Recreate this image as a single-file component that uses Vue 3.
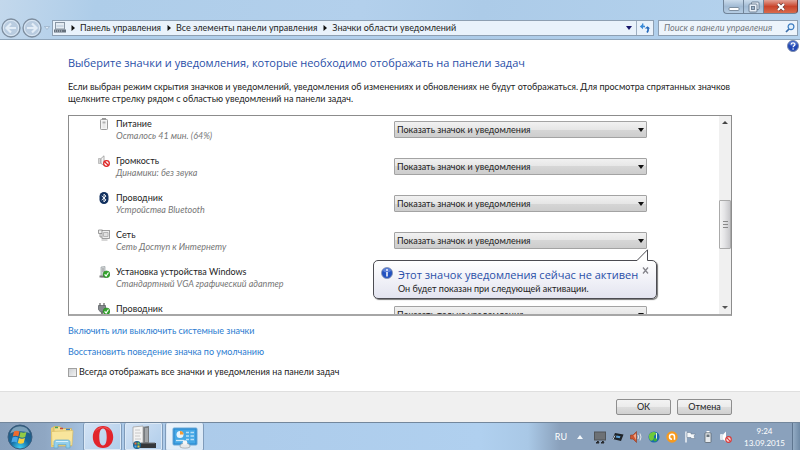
<template>
  <div class="desktop">
    <!-- Заголовок окна и адресная строка -->
    <header class="chrome">
      <div class="window-buttons">
        <button class="win-btn" aria-label="Свернуть">
          <svg width="12" height="12" viewBox="0 0 12 12"><rect x="1" y="6.5" width="10" height="3" rx="1" fill="#fff" stroke="#66788c" stroke-width=".8" /></svg>
        </button>
        <button class="win-btn" aria-label="Развернуть">
          <svg width="12" height="12" viewBox="0 0 12 12" fill="#e8eff7" stroke="#66788c" stroke-width=".9">
            <rect x="3.5" y="1" width="7.5" height="7.5" rx="1" />
            <rect x="1" y="3" width="8" height="8" rx="1" />
            <rect x="3.5" y="5.5" width="3" height="3" fill="#9db3ca" />
          </svg>
        </button>
        <button class="win-btn close" aria-label="Закрыть">
          <svg width="12" height="12" viewBox="0 0 12 12">
            <path d="M3 3l6 6M9 3l-6 6" stroke="#6d3a37" stroke-width="3.6" />
            <path d="M3 3l6 6M9 3l-6 6" stroke="#fff" stroke-width="2.2" />
          </svg>
        </button>
      </div>

      <div class="nav">
        <button class="round" aria-label="Назад">
          <svg width="20" height="20" viewBox="0 0 20 20">
            <circle cx="10" cy="10" r="9" fill="#b9cce0" stroke="#7e8e9f" stroke-width="1.3" />
            <circle cx="10" cy="10" r="7.6" fill="none" stroke="#dbe7f3" />
            <path d="M15 10H6M10 5.5L5.5 10l4.5 4.5" fill="none" stroke="#e3edf7" stroke-width="2.2" />
          </svg>
        </button>
        <button class="round" aria-label="Вперед">
          <svg width="20" height="20" viewBox="0 0 20 20">
            <circle cx="10" cy="10" r="9" fill="#b9cce0" stroke="#7e8e9f" stroke-width="1.3" />
            <circle cx="10" cy="10" r="7.6" fill="none" stroke="#dbe7f3" />
            <path d="M5 10h9M10 5.5l4.5 4.5-4.5 4.5" fill="none" stroke="#e3edf7" stroke-width="2.2" />
          </svg>
        </button>
        <svg class="history" width="6" height="4" viewBox="0 0 6 4"><path d="M.5.5h5L3 3.5z" fill="#dce9f6" stroke="#8fa5bc" stroke-width=".6" /></svg>

        <div class="address">
          <svg class="address-icon" width="12" height="11" viewBox="0 0 12 11">
            <rect x="1.5" y=".5" width="9" height="6.5" fill="#e4ebf2" stroke="#8a97a5" />
            <path d="M2.5 4h7" stroke="#b4c6d8" />
            <rect x="0" y="7.5" width="12" height="3" fill="#66717d" />
            <path d="M1 9h7" stroke="#c5ced7" stroke-dasharray="1 1" />
          </svg>
          <template v-for="miga in migas" :key="miga">
            <svg class="crumb-arrow" width="4" height="6" viewBox="0 0 4 6"><path d="M.5 0v6L4 3z" fill="#111" /></svg>
            <a href="#" class="crumb">{{ miga }}</a>
          </template>
          <button class="address-drop" aria-label="Предыдущие расположения">
            <svg width="6" height="4" viewBox="0 0 6 4"><path d="M0 0h6L3 4z" fill="#16166b" /></svg>
          </button>
          <button class="refresh" aria-label="Обновить">
            <svg width="12" height="12" viewBox="0 0 12 12">
              <path d="M3.7 1.5v3" stroke="#3a8ad8" stroke-width="1.4" />
              <path d="M.8 4.5L4 1.8v5.4z" fill="#3a8ad8" />
              <path d="M3 4.5h3" stroke="#3a8ad8" stroke-width="1.6" />
              <path d="M5.8 6.5l2.7-2.2 2.7 2.2z" fill="#2368bb" />
              <path d="M8.7 5.5c.9 2 .5 3.5-.7 5" fill="none" stroke="#2368bb" stroke-width="1.6" />
            </svg>
          </button>
        </div>

        <div class="search">
          <input v-model="busqueda" type="text" aria-label="Поиск" placeholder="Поиск в панели управления" />
          <svg width="10" height="10" viewBox="0 0 10 10" fill="none">
            <path d="M4.5 5.5L1 9" stroke="#3c6ea8" stroke-width="1.7" />
            <circle cx="6" cy="3.8" r="2.9" fill="#e4f1fc" stroke="#3c7cc0" stroke-width="1.2" />
          </svg>
        </div>
      </div>
    </header>

    <!-- Содержимое -->
    <main class="content">
      <button class="help" aria-label="Справка">
        <svg width="12" height="12" viewBox="0 0 12 12">
          <circle cx="6" cy="6" r="5.5" fill="#2349b5" stroke="#7d8cad" />
          <ellipse cx="6" cy="3.5" rx="3.8" ry="2.3" fill="#6f8fdc" opacity=".6" />
          <path d="M4.2 4.6c0-2.4 3.7-2.3 3.7-.2C7.9 5.7 6.1 5.7 6.1 7.3" fill="none" stroke="#fff" stroke-width="1.2" />
          <circle cx="6.1" cy="9" r=".8" fill="#fff" />
        </svg>
      </button>

      <h1>Выберите значки и уведомления, которые необходимо отображать на панели задач</h1>
      <p class="intro">
        Если выбран режим скрытия значков и уведомлений, уведомления об изменениях и обновлениях не будут отображаться. Для просмотра спрятанных значков щелкните стрелку рядом с областью уведомлений на панели задач.
      </p>

      <div class="list">
        <div class="rows">
          <div v-for="(fila, i) in filas" :key="i" class="row">
            <svg v-if="fila.icono === 'battery'" class="row-icon" width="12" height="12" viewBox="0 0 12 12">
              <rect x="4" y="0" width="4" height="2" fill="#999" />
              <rect x="2.5" y="1.5" width="7" height="10" rx=".8" fill="#f4f4f4" stroke="#9d9d9d" />
              <rect x="4.5" y="3.5" width="3" height="2" fill="#b0b0b0" />
              <path d="M4.5 7h3M4.5 9h3" stroke="#dcdcdc" />
            </svg>
            <svg v-else-if="fila.icono === 'volume'" class="row-icon" width="12" height="12" viewBox="0 0 12 12">
              <path d="M.5 3.5h2v5h-2z" fill="#d5d5d5" stroke="#aaa" stroke-width=".7" />
              <path d="M3 3.5L6 .8v9.5L3 8.5z" fill="#f3f3f3" stroke="#999" stroke-width=".8" />
              <circle cx="8.5" cy="8.5" r="2.8" fill="#fff" stroke="#e02424" stroke-width="1.3" />
              <path d="M6.7 6.7l3.6 3.6" stroke="#e02424" stroke-width="1.3" />
            </svg>
            <svg v-else-if="fila.icono === 'bluetooth'" class="row-icon" width="12" height="12" viewBox="0 0 12 12">
              <rect x="1.5" y="0" width="9" height="12" rx="4.5" fill="#12305e" />
              <path d="M3.7 3.9l4.3 4-2 2V2.1l2 2-4.3 4" fill="none" stroke="#fff" stroke-width=".9" />
            </svg>
            <svg v-else-if="fila.icono === 'network'" class="row-icon" width="12" height="12" viewBox="0 0 12 12" fill="#eee" stroke="#888" stroke-width=".8">
              <path d="M.5 1h4v3.5h-4zM2 4.5V8h2" />
              <rect x="4" y="1.5" width="7.5" height="8" />
              <path d="M5.5 3.5H10v4H5.5z" fill="#e0e0e0" stroke="#aaa" />
              <path d="M3.5 11h6" stroke="#999" />
            </svg>
            <svg v-else class="row-icon" width="12" height="12" viewBox="0 0 12 12">
              <g v-if="fila.icono === 'device'">
                <path d="M3 1l4-.5V11H3z" fill="#d3d6d8" stroke="#9aa0a4" stroke-width=".7" />
                <path d="M1.5 9.5h7v2h-7z" fill="#777" />
                <path d="M4 3h2M4 5h2" stroke="#888" stroke-width=".8" />
              </g>
              <g v-else>
                <path d="M2 0v3M6 0v3" stroke="#777" fill="none" stroke-width="1.4" />
                <path d="M.5 2.5h7v4L5.5 9h-3l-2-2.5z" fill="#85898d" stroke="#55595d" stroke-width=".7" />
                <path d="M4 9v3" stroke="#555" stroke-width="1.5" />
              </g>
              <circle cx="8.5" cy="8.3" r="3.4" fill="#36a52e" stroke="#1f7c1d" stroke-width=".5" />
              <path d="M6.6 8.3l1.5 1.7 2.4-3.5" fill="none" stroke="#fff" stroke-width="1.2" />
            </svg>

            <label class="row-text" :for="'sel' + i">
              <span class="row-title">{{ fila.titulo }}</span>
              <span class="row-sub">{{ fila.detalle }}</span>
            </label>

            <div class="picker">
              <select :id="'sel' + i" v-model="fila.valor">
                <option v-for="op in opciones" :key="op">{{ op }}</option>
              </select>
              <svg class="picker-arrow" width="6" height="4" viewBox="0 0 6 4"><path d="M0 0h6L3 4z" fill="#111" /></svg>

              <div v-if="fila.aviso && mostrarAviso" class="balloon" role="status">
                <svg class="balloon-tail" width="12" height="12" viewBox="0 0 12 12">
                  <path d="M0 11.5L10.5.8V12H0z" fill="#fff" />
                  <path d="M0 11.5L10.5.8v10.7" fill="none" stroke="#4c4c52" />
                </svg>
                <svg class="balloon-icon" width="12" height="12" viewBox="0 0 12 12">
                  <circle cx="6" cy="6" r="5.5" fill="#2352c0" stroke="#8792ad" stroke-width=".8" />
                  <ellipse cx="6" cy="3.3" rx="3.8" ry="2.2" fill="#7f9de6" opacity=".6" />
                  <path d="M6 5v4.5" stroke="#fff" stroke-width="1.5" />
                  <circle cx="6" cy="3" r=".9" fill="#fff" />
                </svg>
                <div class="balloon-body">
                  <strong>Этот значок уведомления сейчас не активен</strong>
                  <span>Он будет показан при следующей активации.</span>
                </div>
                <button class="balloon-close" aria-label="Закрыть" @click="mostrarAviso = false">
                  <svg width="7" height="7" viewBox="0 0 7 7"><path d="M1 .5l5 6M6 .5l-5 6" stroke="#85858c" stroke-width="1.3" /></svg>
                </button>
              </div>
            </div>
          </div>
        </div>

        <div class="scrollbar">
          <svg width="6" height="3" viewBox="0 0 6 3"><path d="M0 3h6L3 0z" fill="#444" /></svg>
          <div class="thumb"><i></i><i></i><i></i></div>
          <svg width="6" height="3" viewBox="0 0 6 3"><path d="M0 0h6L3 3z" fill="#555" /></svg>
        </div>
      </div>

      <a href="#" class="link">Включить или выключить системные значки</a>
      <a href="#" class="link">Восстановить поведение значка по умолчанию</a>
      <label class="always">
        <input v-model="mostrarTodo" type="checkbox" />
        Всегда отображать все значки и уведомления на панели задач
      </label>
    </main>

    <footer class="actions">
      <button class="btn">ОК</button>
      <button class="btn">Отмена</button>
    </footer>

    <!-- Панель задач -->
    <div class="taskbar">
      <button class="start" aria-label="Пуск">
        <svg width="26" height="26" viewBox="0 0 26 26">
          <defs>
            <radialGradient id="orb" cx=".5" cy=".95" r=".9">
              <stop offset="0" stop-color="#3fd0f5" />
              <stop offset=".45" stop-color="#14699f" />
              <stop offset="1" stop-color="#2b5677" />
            </radialGradient>
          </defs>
          <circle cx="13" cy="13" r="12" fill="url(#orb)" stroke="#3b5f80" />
          <path d="M3 9.5a10.5 10.5 0 0 1 20 0c-6-3-14-3-20 0z" fill="#c0d8e8" opacity=".55" />
          <path d="M7 7.5c2-1 3.5-1 5.5 0l-1.2 5c-2-1-3.5-1-5.5 0z" fill="#ee6a2c" />
          <path d="M13.5 8c2 1 3.8 1 6 0l-1.3 5c-2 1-3.9 1-5.9 0z" fill="#93cb45" />
          <path d="M5.5 13.5c2-1 3.5-1 5.5 0l-1.2 5c-2-1-3.5-1-5.5 0z" fill="#48a6e8" />
          <path d="M12 14c2 1 3.9 1 6 0l-1.3 5c-2 1-3.9 1-5.9 0z" fill="#fbcf3b" />
        </svg>
      </button>
      <button class="task plain" aria-label="Библиотеки">
        <svg width="24" height="24" viewBox="0 0 24 24">
          <path d="M1 3l4-2 3 1.5V22H1z" fill="#e8cd75" />
          <path d="M4 1.5h6l2 2h9.5V21H4z" fill="#f4df92" stroke="#cfae56" stroke-width=".7" />
          <path d="M5 2.5h3" stroke="#4aa152" stroke-width="1.5" />
          <path d="M10 3.5h3" stroke="#c4483e" stroke-width="1.5" />
          <path d="M16 4.5h4" stroke="#3c7fc4" stroke-width="1.5" />
          <path d="M1.5 6.5L23 5.5l-1 15H2z" fill="#f8e59c" stroke="#d9bd66" stroke-width=".7" />
          <path d="M4 23v-5.5c0-1.8 1-2.5 2.5-2.5h11c1.5 0 2.5.7 2.5 2.5V23h-4v-3.5H8V23z" fill="#93cfec" stroke="#61a6cd" stroke-width=".7" />
          <path d="M6 16.5h12" stroke="#d9f2fc" />
        </svg>
      </button>
      <button class="task" aria-label="Opera">
        <svg width="24" height="24" viewBox="0 0 24 24">
          <path fill-rule="evenodd" d="M12 1C5.8 1 1.8 5.8 1.8 12S5.8 23 12 23s10.2-4.8 10.2-11S18.2 1 12 1zm0 2.5c2.7 0 3.7 3.8 3.7 8.5s-1 8.5-3.7 8.5-3.7-3.8-3.7-8.5 1-8.5 3.7-8.5z" fill="#e2242c" />
          <path d="M4 7c1-3 4-5 8-5s7 2 8 5c-1.5-2-3.3-2.8-4.8-3-.7-1-1.7-1.5-3.2-1.5S9.5 3 8.8 4C7.3 4.2 5.5 5 4 7z" fill="#f4716d" opacity=".6" />
        </svg>
      </button>
      <button class="task" aria-label="Диспетчер устройств">
        <svg width="26" height="24" viewBox="0 0 26 24">
          <path d="M11 2l7-1v18h-7z" fill="#777b7f" />
          <path d="M14 3h3v14h-3z" fill="#a2a5a8" />
          <path d="M2 2l10-1v18H2z" fill="#f3f3f3" stroke="#a3a3a3" stroke-width=".8" />
          <path d="M4 5h5M4 8h6M4 11h5M4 14h6" stroke="#bcbcbc" stroke-width=".8" />
          <path d="M3 18h22v5H3z" fill="#34373b" />
          <path d="M10 18h14" stroke="#75797d" />
          <circle cx="6" cy="20" r="4" fill="#1b638f" />
          <path d="M3.5 17.5h2v2h-2z" fill="#ea6b34" />
          <path d="M6.5 17.5h2v2h-2z" fill="#87c648" />
          <path d="M3.5 20.5h2v2h-2z" fill="#4ea9e8" />
          <path d="M6.5 20.5h2v2h-2z" fill="#f6cb3c" />
        </svg>
      </button>
      <button class="task active" aria-label="Панель управления">
        <svg width="26" height="24" viewBox="0 0 26 24">
          <rect x="1" y="3" width="24" height="17" rx="1" fill="#2687cf" stroke="#6aaad9" />
          <rect x="2.5" y="4.5" width="21" height="14" fill="#46a8e6" />
          <circle cx="8" cy="9.5" r="3.5" fill="#e9f4fb" />
          <path d="M8 9.5V6a3.5 3.5 0 0 1 3.5 3.5z" fill="#f39a35" />
          <path d="M4 15.5h8" stroke="#cfe9f9" stroke-width="1.3" />
          <path d="M14 7.5h3M18.5 7.5H22M14 11h3M18.5 11H22M14 14.5h3M18.5 14.5H22" stroke="#b9dff6" stroke-width="1.4" />
          <path d="M8 22c0-3 2-4 5-4s5 1 5 4c-2 1.5-8 1.5-10 0z" fill="#e5e8ea" stroke="#9aa1a6" stroke-width=".7" />
          <circle cx="13" cy="17.5" r="2.3" fill="#f4f5f6" />
        </svg>
      </button>

      <div class="tray">
        <span class="lang">RU</span>
        <svg class="tray-up" width="6" height="4" viewBox="0 0 6 4"><path d="M0 4h6L3 0z" fill="#f4f8fb" /></svg>
        <svg width="12" height="13" viewBox="0 0 12 13">
          <rect x=".5" y="1" width="11" height="8" fill="#6d7175" stroke="#505458" />
          <path d="M2 12l2-2 1 2zM7 12l2-2 1 2z" fill="#26292c" stroke="#26292c" />
        </svg>
        <svg width="12" height="12" viewBox="0 0 12 12">
          <path d="M3 2l8.5 1.5L9 10 .5 8z" fill="#1e2328" />
          <path d="M4.5 4.5l4 .8-.8 2-4-.8z" fill="#5ea1d6" />
          <path d="M1 8.5l2-4" stroke="#bfc8d0" />
        </svg>
        <svg width="12" height="12" viewBox="0 0 12 12">
          <path d="M.5 4H3L6.5.5v11L3 8H.5z" fill="#cd5530" stroke="#8f3a22" stroke-width=".6" />
          <path d="M3.5 4.5L6 2.5V9" fill="#f4a584" />
          <path d="M8 4q1.2 2 0 4M10 2.5q2 3.5 0 7" fill="none" stroke="#ececec" stroke-width=".9" />
        </svg>
        <svg width="12" height="12" viewBox="0 0 12 12">
          <circle cx="6" cy="6" r="5.5" fill="#1b68ac" />
          <path d="M2 2.5C4 .5 7 .5 8 2S5.5 4 6 6s-2 4.5-3.5 3.5S0 4.5 2 2.5z" fill="#6fca3a" />
          <path d="M8.5 2v6.5" stroke="#e7f6da" />
          <circle cx="7.2" cy="8.8" r="1.8" fill="#39b338" />
        </svg>
        <svg width="12" height="12" viewBox="0 0 12 12">
          <circle cx="6" cy="6" r="5.7" fill="#f79a1e" />
          <path d="M8.5 8.8v-3A2.5 2.5 0 1 0 6 8.3" fill="none" stroke="#fff" stroke-width="1.5" />
        </svg>
        <svg width="12" height="12" viewBox="0 0 12 12">
          <path d="M2 .5v11" stroke="#fff" stroke-width="1.3" />
          <path d="M3 1.5h4V3h4.5L10 5l1 2.5H7v-1H3z" fill="#f5f8fa" stroke="#62758a" stroke-width=".5" />
        </svg>
        <svg width="12" height="12" viewBox="0 0 12 12">
          <path d="M4.5 0h3v2h-3z" fill="#fff" />
          <rect x="3" y="1.8" width="6" height="9.7" rx=".8" fill="#e6eaed" stroke="#59656f" stroke-width=".8" />
          <rect x="4.5" y="3.5" width="3" height="2.5" fill="#6a757e" />
        </svg>
        <svg width="12" height="12" viewBox="0 0 12 12">
          <path d="M.5 3.5h2v5h-2z" fill="#dfe6ed" stroke="#fff" stroke-width=".6" />
          <path d="M3 3.5L6 .5v10l-3-2z" fill="#fff" />
          <circle cx="8.5" cy="8.5" r="2.8" fill="#f6dcdc" stroke="#d93a3a" stroke-width="1.2" />
          <path d="M6.7 6.7l3.6 3.6" stroke="#d93a3a" stroke-width="1.2" />
        </svg>
        <div class="clock">
          <span>9:24</span>
          <span>13.09.2015</span>
        </div>
      </div>
      <button class="show-desktop" aria-label="Свернуть все окна"></button>
    </div>
  </div>
</template>

<script setup>
import { ref } from 'vue';

const migas = ['Панель управления', 'Все элементы панели управления', 'Значки области уведомлений'];
const opciones = ['Показать значок и уведомления', 'Скрыть значок и уведомления', 'Показать только уведомления'];

const busqueda = ref('');
const mostrarTodo = ref(false);
const mostrarAviso = ref(true);

const filas = ref([
  { icono: 'battery', titulo: 'Питание', detalle: 'Осталось 41 мин. (64%)', valor: opciones[0] },
  { icono: 'volume', titulo: 'Громкость', detalle: 'Динамики: без звука', valor: opciones[0] },
  { icono: 'bluetooth', titulo: 'Проводник', detalle: 'Устройства Bluetooth', valor: opciones[0] },
  { icono: 'network', titulo: 'Сеть', detalle: 'Сеть Доступ к Интернету', valor: opciones[0], aviso: true },
  { icono: 'device', titulo: 'Установка устройства Windows', detalle: 'Стандартный VGA графический адаптер', valor: opciones[0] },
  { icono: 'eject', titulo: 'Проводник', detalle: '', valor: opciones[2] },
]);
</script>

<style>
body {
  margin: 0;
}
</style>

<style scoped>
* {
  box-sizing: border-box;
}

.desktop {
  min-height: 100vh;
  display: flex;
  flex-direction: column;
  background: #fff;
  color: #222;
  font-family: Lato, "Open Sans", sans-serif;
  font-size: 9px;
  line-height: 12px;
}

button,
input,
select {
  font: inherit;
  color: inherit;
  margin: 0;
  padding: 0;
}

svg {
  display: block;
  flex: none;
}

a {
  text-decoration: none;
}

/* Рамка окна */
.chrome {
  height: 40px;
  background: linear-gradient(100deg, #c3d8ec 0, #aecde9 12%, #b3d0ec 45%, #accbe8 60%, #b5d3ee 100%);
  border-bottom: 1px solid #8fa5ba;
}

.window-buttons {
  display: flex;
  justify-content: flex-end;
  height: 19px;
  padding-right: 2px;
}

.win-btn {
  width: 20px;
  height: 14px;
  display: flex;
  align-items: center;
  justify-content: center;
  border: 1px solid #71859a;
  border-top: 0;
  border-right: 0;
  background: linear-gradient(#cbdcec, #a2bbd4 50%, #b5cde4);
}

.win-btn:first-child {
  border-radius: 0 0 0 4px;
}

.win-btn.close {
  width: 35px;
  border-right: 1px solid #6b3838;
  border-radius: 0 0 4px 0;
  background: linear-gradient(#e2a195, #c9442c 50%, #d96a4c);
}

.nav {
  display: flex;
  align-items: center;
  height: 17px;
  padding: 0 2px 0 1px;
}

.round {
  border: 0;
  background: none;
  margin-right: 1px;
}

.history {
  margin: 0 2px 0 1px;
}

.address {
  flex: 1;
  height: 16px;
  display: flex;
  align-items: center;
  background: #e9f2fb;
  border: 1px solid #8d9fb2;
}

.address-icon {
  margin: 0 5px 0 1px;
}

.crumb {
  color: #222;
  margin: 0 6px 0 5px;
}

.address-drop {
  margin-left: auto;
  width: 14px;
  height: 14px;
  display: flex;
  align-items: center;
  justify-content: center;
  border: 0;
  background: none;
}

.refresh {
  width: 17px;
  height: 14px;
  display: flex;
  align-items: center;
  justify-content: center;
  border: 0;
  border-left: 1px solid #9fb0c2;
  background: none;
}

.search {
  width: 140px;
  height: 16px;
  margin-left: 4px;
  padding: 0 2px 0 5px;
  display: flex;
  align-items: center;
  background: #edf4fb;
  border: 1px solid #8d9fb2;
}

.search input {
  flex: 1;
  min-width: 0;
  border: 0;
  background: none;
  outline: none;
}

.search input::placeholder {
  color: #74797f;
  font-style: italic;
}

/* Содержимое */
.content {
  flex: 1;
  position: relative;
  display: flex;
  flex-direction: column;
  align-items: flex-start;
  padding: 14px 68px 13px;
}

.help {
  position: absolute;
  top: 0;
  right: 1px;
  border: 0;
  background: none;
}

h1 {
  margin: 0;
  font-family: "Open Sans", "Noto Sans", sans-serif;
  font-size: 11px;
  line-height: 18px;
  font-weight: 400;
  color: #2a50a8;
}

.intro {
  margin: 9px 0 10px;
}

.list {
  align-self: stretch;
  flex: 1 0 201px;
  height: 201px;
  display: flex;
  overflow: hidden;
  border: 1px solid #8c8c8c;
  border-bottom: 2px solid #a6a6a6;
}

.rows {
  flex: 1;
  height: 198px;
  overflow: hidden;
}

.row {
  height: 37px;
  display: flex;
  align-items: flex-start;
  padding: 2px 72px 0 29px;
}

.row-icon {
  margin-right: 6px;
}

.row-text {
  flex: 1;
}

.row-title,
.row-sub {
  display: block;
}

.row-sub {
  color: #777;
  font-style: italic;
}

.picker {
  position: relative;
  width: 253px;
  padding-top: 3px;
}

.picker select {
  display: block;
  width: 100%;
  height: 17px;
  padding: 0 2px;
  appearance: none;
  border: 1px solid #a3a3a3;
  border-radius: 1px;
  background: linear-gradient(#f1f1f1, #e6e6e6 50%, #d6d6d6 50%, #cdcdcd);
}

.picker-arrow {
  position: absolute;
  top: 10px;
  right: 3px;
  pointer-events: none;
}

.balloon {
  position: absolute;
  top: 31px;
  right: -10px;
  z-index: 2;
  width: 284px;
  height: 39px;
  display: flex;
  align-items: flex-start;
  padding: 6px 7px 0 7px;
  border: 1px solid #4c4c52;
  border-radius: 5px;
  background: linear-gradient(#fff, #e3e4f0);
  box-shadow: 1px 1px 1px #777;
}

.balloon-tail {
  position: absolute;
  top: -12px;
  right: 7px;
}

.balloon-body {
  flex: 1;
  min-width: 0;
  margin-left: 5px;
  white-space: nowrap;
}

.balloon-body strong,
.balloon-body span {
  display: block;
}

.balloon-body strong {
  font-family: "Open Sans", "Noto Sans", sans-serif;
  font-size: 11px;
  line-height: 16px;
  font-weight: 400;
  color: #2a50a8;
}

.balloon-close {
  border: 0;
  background: none;
}

.scrollbar {
  width: 12px;
  display: flex;
  flex-direction: column;
  align-items: center;
  padding: 5px 0;
  background: #f0f0f0;
}

.thumb {
  width: 12px;
  height: 49px;
  margin: auto 0;
  position: relative;
  top: 9px;
  display: flex;
  flex-direction: column;
  align-items: center;
  justify-content: center;
  gap: 2px;
  border: 1px solid #aaa;
  border-radius: 1px;
  background: linear-gradient(90deg, #f4f4f4, #e4e4e6 45%, #c8c8cb);
}

.thumb i {
  width: 5px;
  height: 1px;
  background: #888;
}

.link {
  color: #2b7bd0;
  margin-top: 9px;
}

.always {
  display: flex;
  align-items: center;
  margin-top: 8px;
}

.always input {
  width: 9px;
  height: 9px;
  margin-right: 2px;
  appearance: none;
  border: 1px solid #a0a0a0;
  background: linear-gradient(135deg, #cdd0d4, #f2f2f2);
}

.always input:checked {
  background: #2b7bd0;
}

.actions {
  height: 31px;
  display: flex;
  justify-content: flex-end;
  align-items: center;
  gap: 6px;
  padding-right: 68px;
  background: #f0f0f0;
  border-top: 1px solid #dfdfdf;
}

.btn {
  width: 55px;
  height: 16px;
  line-height: 12px;
  border: 1px solid #8e8e8e;
  border-radius: 2px;
  background: linear-gradient(#f3f3f3, #ebebeb 50%, #dddddd 50%, #d0d0d0);
}

/* Панель задач */
.taskbar {
  height: 29px;
  display: flex;
  align-items: stretch;
  gap: 2px;
  border-top: 1px solid #73879c;
  background: linear-gradient(90deg, #879fbb 0, #8fa7c3 45px, #abc9e8 95px, #b0d0ef 60%, #a9c8e6 66%, #8aa1bc 70%, #8aa1bc);
}

.start {
  width: 40px;
  display: flex;
  align-items: center;
  justify-content: center;
  border: 0;
  background: none;
}

.task {
  width: 39px;
  display: flex;
  align-items: center;
  justify-content: center;
  border: 1px solid #7f9bba;
  border-top: 0;
  border-radius: 2px;
  background: linear-gradient(135deg, #d3e3f5, #b0cdea);
  box-shadow: inset 0 0 0 1px #dce9f6;
}

.task.active {
  background: linear-gradient(135deg, #edf4fb, #d6e6f5);
}

.task.plain {
  border-color: transparent;
  background: none;
  box-shadow: none;
}

.tray {
  margin-left: auto;
  display: flex;
  align-items: center;
  gap: 6px;
  color: #fff;
}

.lang {
  margin-right: 4px;
}

.tray-up {
  margin-right: 5px;
}

.clock {
  margin: 0 5px 0 6px;
  display: flex;
  flex-direction: column;
  align-items: center;
  font-size: 8px;
}

.show-desktop {
  width: 8px;
  border: 1px solid #5f7690;
  border-width: 0 0 0 1px;
  background: linear-gradient(90deg, #93abc4, #6f8aa6);
}
</style>
